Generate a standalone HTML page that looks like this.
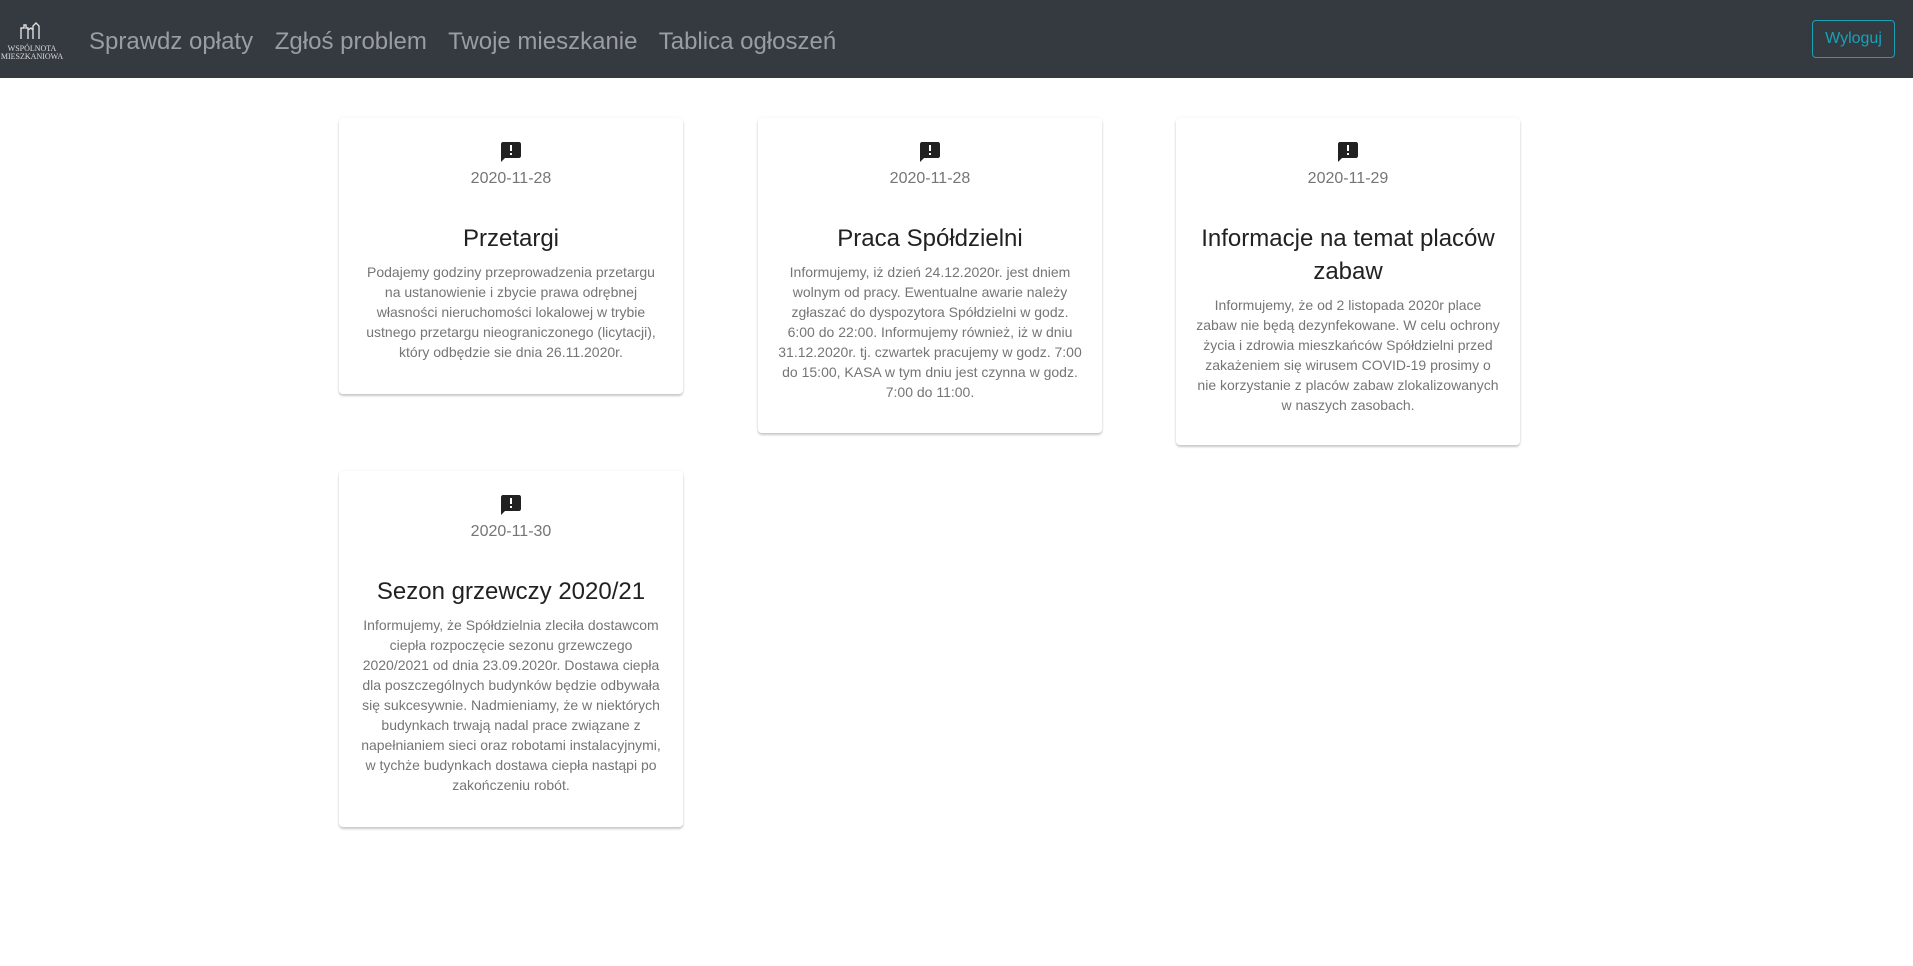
<!DOCTYPE html>
<html><head><meta charset="utf-8"><style>
*{box-sizing:border-box;margin:0;padding:0}
body{width:1913px;height:966px;background:#fff;font-family:"Liberation Sans",Arial,sans-serif;position:relative;overflow:hidden}
nav{position:absolute;left:0;top:0;width:1913px;height:78px;background:#343a40}
.links{position:absolute;left:89px;top:28px;font-size:24px;color:#9a9da1;white-space:nowrap}
.links span{margin-right:15px}
.logo{position:absolute;left:0;top:20px;width:64px;text-align:center;color:#ddd;font-family:"Liberation Serif",serif;font-size:8px;line-height:8px}
.btn{position:absolute;left:1812px;top:20px;width:83px;height:38px;border:1px solid #17a2b8;border-radius:4px;color:#17a2b8;font-size:16px;text-align:center;line-height:36px}
.card{position:absolute;width:344px;background:#fff;border-radius:4px;box-shadow:0 2px 2px rgba(0,0,0,.2),0 0 3px rgba(0,0,0,.06);text-align:center;padding:22px 16px 0}
.card svg{display:block;margin:0 auto}
.date{font-size:16px;color:#757575;margin-top:5px;line-height:20px}
.title{font-size:24px;color:#212121;margin-top:33px;line-height:33px}
.text{font-size:14px;color:#757575;line-height:20px;margin-top:7px;padding:0 6px}
</style></head><body>
<nav>
<div class="logo"><svg width="26" height="18" viewBox="0 0 26 18" style="display:block;margin:2px auto 5px"><path d="M2 17V6h3V3h2v3h2v11M9 17V8l3-2 2 2v9M14 17V4l3-3 3 3v13" fill="none" stroke="#ddd" stroke-width="1.4"/></svg>WSPÓLNOTA<br>MIESZKANIOWA</div>
<div class="links"><span>Sprawdz opłaty</span> <span>Zgłoś problem</span> <span>Twoje mieszkanie</span> <span>Tablica ogłoszeń</span></div>
<div class="btn">Wyloguj</div>
</nav>

<div class="card" style="left:339px;top:118px;height:276px">
<svg width="24" height="24" viewBox="0 0 24 24"><path d="M20 2H4c-1.1 0-2 .9-2 2v18l4-4h14c1.1 0 2-.9 2-2V4c0-1.1-.9-2-2-2zm-7 9h-2V5h2v6zm0 4h-2v-2h2v2z" fill="#212121"/></svg>
<div class="date">2020-11-28</div>
<div class="title">Przetargi</div>
<div class="text">Podajemy godziny przeprowadzenia przetargu na ustanowienie i zbycie prawa odrębnej własności nieruchomości lokalowej w trybie ustnego przetargu nieograniczonego (licytacji), który odbędzie sie dnia 26.11.2020r.</div>
</div>

<div class="card" style="left:758px;top:118px;height:315px">
<svg width="24" height="24" viewBox="0 0 24 24"><path d="M20 2H4c-1.1 0-2 .9-2 2v18l4-4h14c1.1 0 2-.9 2-2V4c0-1.1-.9-2-2-2zm-7 9h-2V5h2v6zm0 4h-2v-2h2v2z" fill="#212121"/></svg>
<div class="date">2020-11-28</div>
<div class="title">Praca Spółdzielni</div>
<div class="text" style="padding:0 4px">Informujemy, iż dzień 24.12.2020r. jest dniem wolnym od pracy. Ewentualne awarie należy zgłaszać do dyspozytora Spółdzielni w godz. 6:00 do 22:00. Informujemy również, iż w dniu 31.12.2020r. tj. czwartek pracujemy w godz. 7:00 do 15:00, KASA w tym dniu jest czynna w godz. 7:00 do 11:00.</div>
</div>

<div class="card" style="left:1176px;top:118px;height:327px">
<svg width="24" height="24" viewBox="0 0 24 24"><path d="M20 2H4c-1.1 0-2 .9-2 2v18l4-4h14c1.1 0 2-.9 2-2V4c0-1.1-.9-2-2-2zm-7 9h-2V5h2v6zm0 4h-2v-2h2v2z" fill="#212121"/></svg>
<div class="date">2020-11-29</div>
<div class="title">Informacje na temat placów zabaw</div>
<div class="text" style="padding:0 2px">Informujemy, że od 2 listopada 2020r place zabaw nie będą dezynfekowane. W celu ochrony życia i zdrowia mieszkańców Spółdzielni przed zakażeniem się wirusem COVID-19 prosimy o nie korzystanie z placów zabaw zlokalizowanych w naszych zasobach.</div>
</div>

<div class="card" style="left:339px;top:471px;height:356px">
<svg width="24" height="24" viewBox="0 0 24 24"><path d="M20 2H4c-1.1 0-2 .9-2 2v18l4-4h14c1.1 0 2-.9 2-2V4c0-1.1-.9-2-2-2zm-7 9h-2V5h2v6zm0 4h-2v-2h2v2z" fill="#212121"/></svg>
<div class="date">2020-11-30</div>
<div class="title">Sezon grzewczy 2020/21</div>
<div class="text">Informujemy, że Spółdzielnia zleciła dostawcom ciepła rozpoczęcie sezonu grzewczego 2020/2021 od dnia 23.09.2020r. Dostawa ciepła dla poszczególnych budynków będzie odbywała się sukcesywnie. Nadmieniamy, że w niektórych budynkach trwają nadal prace związane z napełnianiem sieci oraz robotami instalacyjnymi, w tychże budynkach dostawa ciepła nastąpi po zakończeniu robót.</div>
</div>
</body></html>
